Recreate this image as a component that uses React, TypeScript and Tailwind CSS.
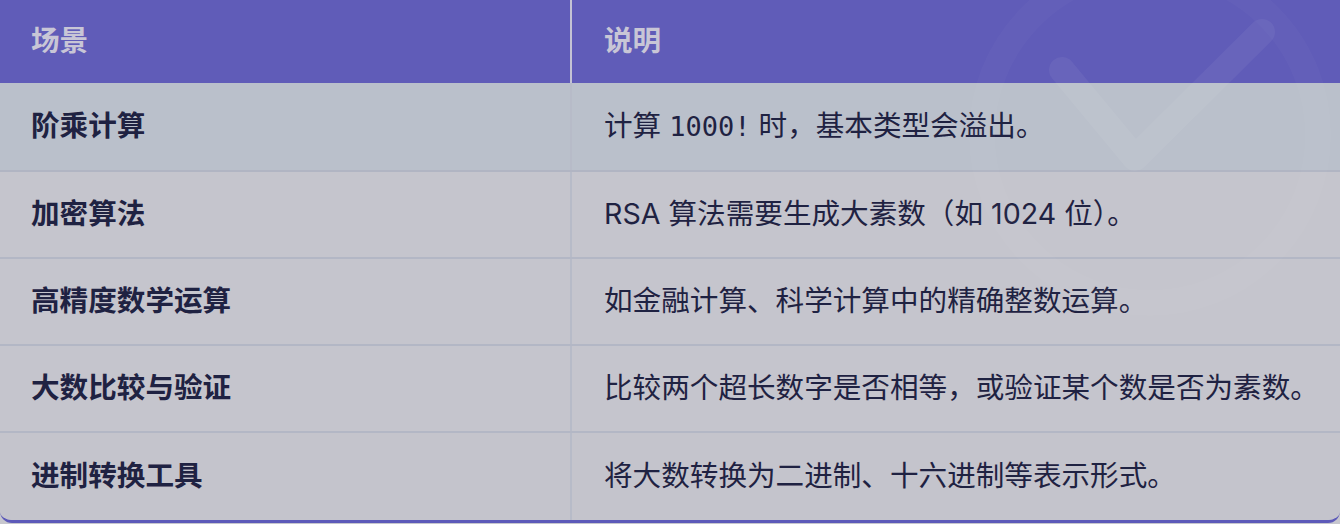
const rows: { scene: string; desc: React.ReactNode }[] = [
  {
    scene: "阶乘计算",
    desc: (
      <>
        计算 <code className="font-['DejaVu_Sans_Mono','Liberation_Mono',monospace] text-[27px] font-medium">1000!</code> 时，基本类型会溢出。
      </>
    ),
  },
  { scene: "加密算法", desc: "RSA 算法需要生成大素数（如 1024 位）。" },
  { scene: "高精度数学运算", desc: "如金融计算、科学计算中的精确整数运算。" },
  { scene: "大数比较与验证", desc: "比较两个超长数字是否相等，或验证某个数是否为素数。" },
  { scene: "进制转换工具", desc: "将大数转换为二进制、十六进制等表示形式。" },
];

export default function App() {
  return (
    <div className="relative h-[524px] w-[1340px] overflow-hidden bg-[#c7c7ce] font-['Inter','Noto_Sans_CJK_SC',sans-serif] text-[28.6px] text-[#1f2242]">
      <div className="overflow-hidden rounded-b-xl border-b-[3px] border-[#5d5ab9]">
        {/* header */}
        <div className="grid h-[83px] grid-cols-[572px_1fr] bg-[#605cb8] font-semibold text-[#c8c6d6]">
          <div className="flex items-center border-r-2 border-[#c4c3d4] pl-[31px]">场景</div>
          <div className="flex items-center pl-[32px]">说明</div>
        </div>

        {rows.map((r, i) => (
          <div
            key={r.scene}
            className={
              i === 0
                ? "grid h-[89px] grid-cols-[572px_1fr] border-b-2 border-[#b1b5c3] bg-[#bac0cb]"
                : i === rows.length - 1
                  ? "grid h-[87px] grid-cols-[572px_1fr] bg-[#c4c4cc]"
                  : "grid h-[87px] grid-cols-[572px_1fr] border-b-2 border-[#b3b7c5] bg-[#c5c5cd]"
            }
          >
            <div className="flex items-center border-r-2 border-[#b7bbc8] pl-[31px] font-semibold">
              {r.scene}
            </div>
            <div className="flex items-center pl-[32px]">
              <span>{r.desc}</span>
            </div>
          </div>
        ))}
      </div>

      {/* faint watermark */}
      <svg
        className="pointer-events-none absolute left-0 top-0"
        width="1340"
        height="524"
        viewBox="0 0 1340 524"
      >
        <circle cx="1150" cy="135" r="168" fill="none" stroke="#ffffff" strokeOpacity="0.025" strokeWidth="26" />
        <polyline
          points="1062,70 1135,158 1262,32"
          fill="none"
          stroke="#ffffff"
          strokeOpacity="0.05"
          strokeWidth="26"
          strokeLinecap="round"
          strokeLinejoin="round"
        />
      </svg>
    </div>
  );
}
